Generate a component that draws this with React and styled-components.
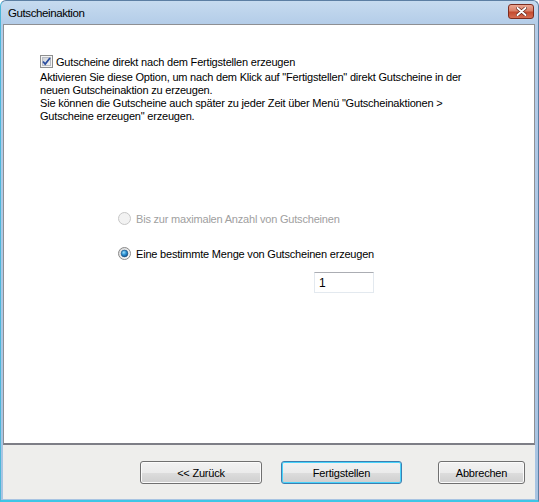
import { createGlobalStyle, styled } from "styled-components";

const GlobalStyle = createGlobalStyle`
  html, body {
    margin: 0;
    padding: 0;
    background: #ffffff;
  }
  body {
    font-family: "Liberation Sans", Arial, sans-serif;
    font-size: 11px;
    letter-spacing: -0.2px;
    color: #000;
  }
`;

const Window = styled.div`
  width: 539px;
  height: 502px;
  box-sizing: border-box;
  display: flex;
  flex-direction: column;
  background: linear-gradient(#c6dbef, #b3cce8 24px, #a8c4e2);
  border: 1px solid #5c7fa3;
  border-left-color: #4cb6d9;
  border-bottom: 2px solid #3ec6e6;
  border-radius: 6px 6px 0 0;
  padding: 0 3px 1px 2px;
`;

const TitleBar = styled.div`
  height: 23px;
  display: flex;
  align-items: center;
  justify-content: space-between;
  padding: 0 1px 0 5px;
`;

const Title = styled.span`
  font-size: 11.5px;
  letter-spacing: -0.4px;
  color: #000;
`;

const CloseButton = styled.div`
  width: 26px;
  height: 15px;
  box-sizing: border-box;
  border: 1px solid #7d2c1f;
  border-radius: 3px;
  display: flex;
  align-items: center;
  justify-content: center;
  background: linear-gradient(#eaa793, #d98068 45%, #c44a2e 55%, #d66d52);
  margin-top: -2px;
`;

const Panel = styled.div`
  height: 421px;
  box-sizing: border-box;
  background: #fff;
  border: 1px solid #8e8f93;
  border-bottom: 2px solid #7d7e86;
  padding: 30px 0 0 36px;
  display: flex;
  flex-direction: column;
`;

const CheckRow = styled.label`
  display: flex;
  align-items: center;
  gap: 3px;
  height: 13px;
`;

const Description = styled.p`
  margin: 3px 0 0;
  line-height: 13px;
`;

const Options = styled.div`
  margin: 89px 0 0 78px;
  display: flex;
  flex-direction: column;
`;

const RadioRow = styled.label`
  display: flex;
  align-items: center;
  gap: 5px;
  height: 13px;
  margin-top: ${(p) => p.$gap || 0}px;
  color: ${(p) => (p.$disabled ? "#a0a0a0" : "#000")};
`;

const CountInput = styled.div`
  width: 60px;
  height: 21px;
  box-sizing: border-box;
  margin: 12px 0 0 196px;
  border: 1px solid #e3e9ef;
  border-top-color: #abadb3;
  display: flex;
  align-items: center;
  padding-left: 4px;
  font-size: 12px;
`;

const Footer = styled.div`
  flex: 1;
  background: #eeeeec;
  display: flex;
  justify-content: flex-end;
  align-items: flex-start;
  padding: 16px 10px 0 0;
`;

const Button = styled.div`
  width: ${(p) => p.$w}px;
  height: 23px;
  box-sizing: border-box;
  margin-left: ${(p) => p.$ml || 0}px;
  border: 1px solid ${(p) => (p.$default ? "#3c7fb1" : "#707070")};
  border-radius: 3px;
  box-shadow: inset 0 0 0 1px ${(p) => (p.$default ? "#48d3fb" : "#fbfbfb")};
  background: linear-gradient(#f2f2f2, #ebebeb 50%, #dddddd 50%, #cfcfcf);
  display: flex;
  align-items: center;
  justify-content: center;
  font-size: 11px;
`;

const CheckBox = () => (
  <svg width="13" height="13" viewBox="0 0 13 13">
    <defs>
      <linearGradient id="cbFill" x1="0" y1="0" x2="1" y2="1">
        <stop offset="0" stopColor="#cbcfd5" />
        <stop offset="1" stopColor="#f6f6f6" />
      </linearGradient>
    </defs>
    <rect x="0.5" y="0.5" width="12" height="12" fill="#f4f4f4" stroke="#8e8f8f" />
    <rect x="2.5" y="2.5" width="8" height="8" fill="url(#cbFill)" stroke="#b8bcc4" />
    <path d="M3 6.5 L5.2 9 L10 3" fill="none" stroke="#2b4ea0" strokeWidth="1.8" />
  </svg>
);

const Radio = ({ checked, disabled }) => (
  <svg width="13" height="13" viewBox="0 0 13 13">
    <defs>
      <radialGradient id="rdDot" cx="0.4" cy="0.35" r="0.7">
        <stop offset="0" stopColor="#9ee0fb" />
        <stop offset="0.5" stopColor="#2a8fd1" />
        <stop offset="1" stopColor="#0f4f8a" />
      </radialGradient>
      <linearGradient id="rdFace" x1="0" y1="0" x2="1" y2="1">
        <stop offset="0" stopColor="#d8d8d8" />
        <stop offset="1" stopColor="#fbfbfb" />
      </linearGradient>
    </defs>
    <circle
      cx="6.5"
      cy="6.5"
      r="6"
      fill={disabled ? "#f2f2f2" : "url(#rdFace)"}
      stroke={disabled ? "#c6c6c6" : "#8a8a8a"}
    />
    {checked && <circle cx="6.5" cy="6.5" r="3.4" fill="url(#rdDot)" stroke="#1e4f7d" strokeWidth="0.6" />}
  </svg>
);

const CloseGlyph = () => (
  <svg width="11" height="9" viewBox="0 0 11 9">
    <path d="M1.5 1 L9.5 8 M9.5 1 L1.5 8" stroke="#5a1a10" strokeWidth="3.2" strokeLinecap="round" />
    <path d="M1.5 1 L9.5 8 M9.5 1 L1.5 8" stroke="#ffffff" strokeWidth="2" strokeLinecap="round" />
  </svg>
);

export default function App() {
  return (
    <>
      <GlobalStyle />
      <Window>
        <TitleBar>
          <Title>Gutscheinaktion</Title>
          <CloseButton>
            <CloseGlyph />
          </CloseButton>
        </TitleBar>
        <Panel>
          <CheckRow>
            <CheckBox />
            <span>Gutscheine direkt nach dem Fertigstellen erzeugen</span>
          </CheckRow>
          <Description>
            Aktivieren Sie diese Option, um nach dem Klick auf "Fertigstellen" direkt Gutscheine in der
            <br />
            neuen Gutscheinaktion zu erzeugen.
            <br />
            Sie können die Gutscheine auch später zu jeder Zeit über Menü "Gutscheinaktionen &gt;
            <br />
            Gutscheine erzeugen" erzeugen.
          </Description>
          <Options>
            <RadioRow $disabled>
              <Radio disabled />
              <span>Bis zur maximalen Anzahl von Gutscheinen</span>
            </RadioRow>
            <RadioRow $gap={22}>
              <Radio checked />
              <span>Eine bestimmte Menge von Gutscheinen erzeugen</span>
            </RadioRow>
            <CountInput>1</CountInput>
          </Options>
        </Panel>
        <Footer>
          <Button $w={122}>&lt;&lt; Zurück</Button>
          <Button $w={121} $ml={19} $default>
            Fertigstellen
          </Button>
          <Button $w={87} $ml={36}>
            Abbrechen
          </Button>
        </Footer>
      </Window>
    </>
  );
}
